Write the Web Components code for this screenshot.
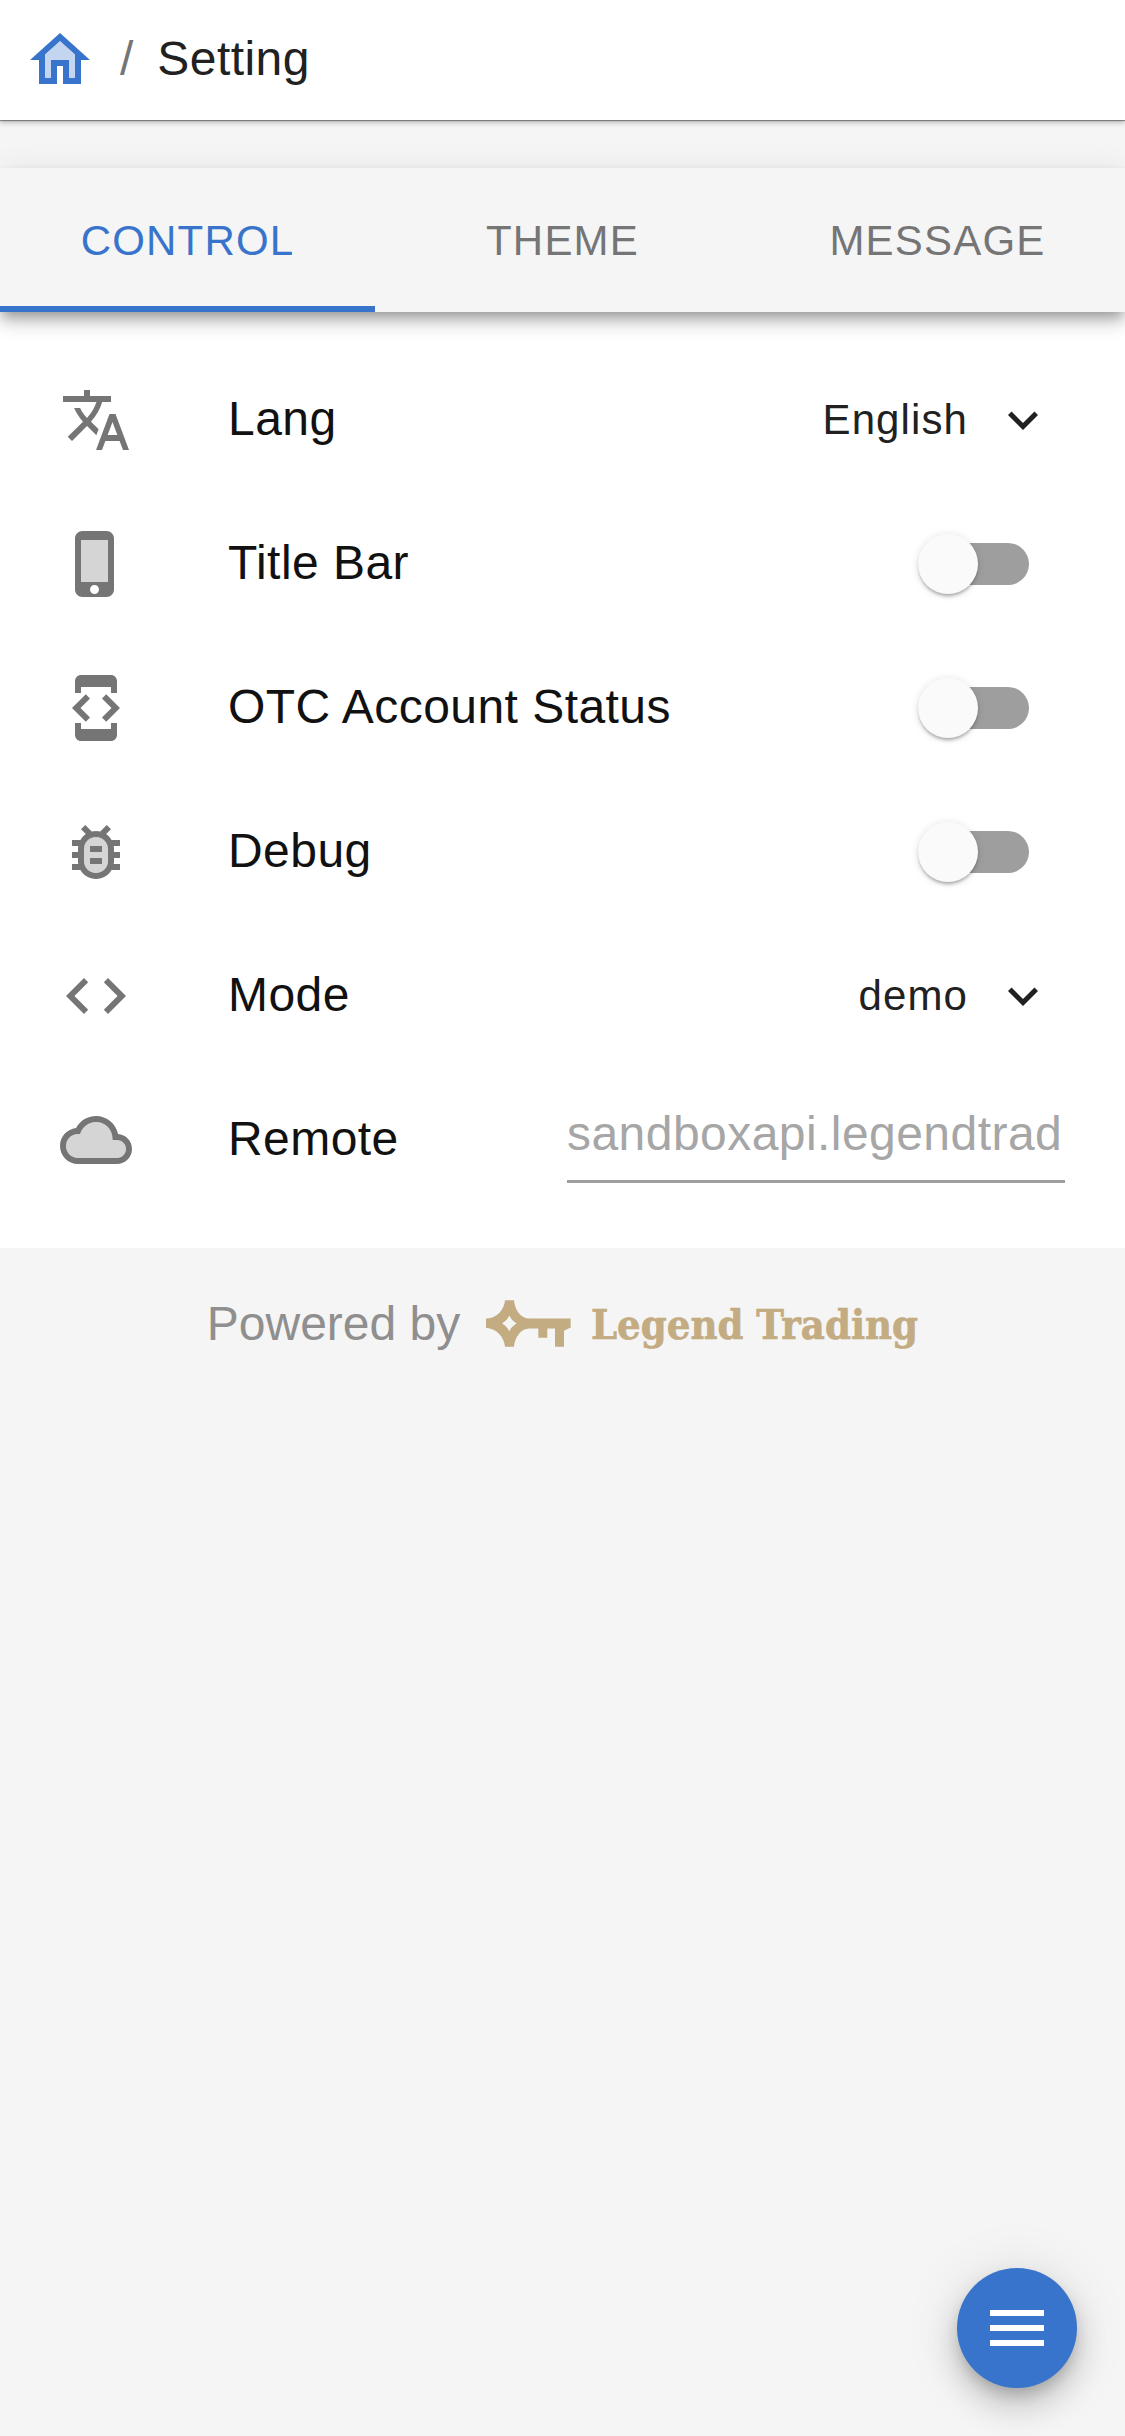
<!DOCTYPE html>
<html lang="en">
<head>
<meta charset="utf-8">
<title>Setting</title>
<style>
  html, body { margin: 0; padding: 0; }
  body { width: 1125px; height: 2436px; background: #f5f5f5; font-family: "Liberation Sans", Arial, sans-serif; overflow: hidden; position: relative; }
</style>
</head>
<body>
<app-header>
  <mat-icon slot="home" name="home" style="color:#3874cb"></mat-icon>
  Setting
</app-header>
<tab-bar>
  <tab-item active>CONTROL</tab-item>
  <tab-item>THEME</tab-item>
  <tab-item>MESSAGE</tab-item>
</tab-bar>
<setting-list>
  <setting-row icon="translate" label="Lang"><select-value>English</select-value></setting-row>
  <setting-row icon="phone" label="Title Bar"><toggle-switch></toggle-switch></setting-row>
  <setting-row icon="devmode" label="OTC Account Status"><toggle-switch></toggle-switch></setting-row>
  <setting-row icon="bug" label="Debug"><toggle-switch></toggle-switch></setting-row>
  <setting-row icon="code" label="Mode"><select-value>demo</select-value></setting-row>
  <setting-row icon="cloud" label="Remote"><text-field>sandboxapi.legendtrad</text-field></setting-row>
</setting-list>
<powered-by></powered-by>
<fab-button></fab-button>

<script>
const ICONS = {
  home: '<path opacity=".3" d="M7 10.19V18h2v-6h6v6h2v-7.81l-5-4.5z"/><path d="M12 3L2 12h3v8h6v-6h2v6h6v-8h3L12 3zm5 15h-2v-6H9v6H7v-7.81l5-4.5 5 4.5V18z"/>',
  translate: '<path d="M12.87 15.07l-2.54-2.51.03-.03c1.74-1.94 2.98-4.17 3.71-6.53H17V4h-7V2H8v2H1v1.99h11.17C11.5 7.92 10.44 9.75 9 11.35 8.07 10.32 7.3 9.19 6.69 8h-2c.73 1.63 1.73 3.17 2.98 4.56l-5.09 5.02L4 19l5-5 3.11 3.11.76-2.04zM18.5 10h-2L12 22h2l1.12-3h4.75L21 22h2l-4.5-12zm-2.62 7l1.62-4.33L19.12 17h-3.24z"/>',
  phone: '<path opacity=".3" d="M7 4h9v14H7z"/><path d="M15.5 1h-8C6.12 1 5 2.12 5 3.5v17C5 21.88 6.12 23 7.5 23h8c1.38 0 2.5-1.12 2.5-2.5v-17C18 2.12 16.88 1 15.5 1zm-4 21c-.83 0-1.5-.67-1.5-1.5s.67-1.5 1.5-1.5 1.5.67 1.5 1.5-.67 1.5-1.5 1.5zm4.5-4H7V4h9v14z"/>',
  devmode: '<path d="M7 5h10v2h2V3c0-1.1-.9-1.99-2-1.99L7 1c-1.1 0-2 .9-2 2v4h2V5zm8.41 11.59L20 12l-4.59-4.59L14 8.83 17.17 12 14 15.17l1.41 1.42zM10 15.17L6.83 12 10 8.83 8.59 7.41 4 12l4.59 4.59L10 15.17zM17 19H7v-2H5v4c0 1.1.9 2 2 2h10c1.1 0 2-.9 2-2v-4h-2v2z"/>',
  bug: '<rect opacity=".3" x="8" y="7" width="8" height="12" rx="4"/><path d="M20 8h-2.81c-.45-.78-1.07-1.45-1.82-1.96L17 4.41 15.59 3l-2.17 2.17C12.96 5.06 12.49 5 12 5s-.96.06-1.41.17L8.41 3 7 4.41l1.62 1.63C7.88 6.55 7.26 7.22 6.81 8H4v2h2.09c-.05.33-.09.66-.09 1v1H4v2h2v1c0 .34.04.67.09 1H4v2h2.81c1.04 1.79 2.97 3 5.19 3s4.15-1.21 5.19-3H20v-2h-2.09c.05-.33.09-.66.09-1v-1h2v-2h-2v-1c0-.34-.04-.67-.09-1H20V8zm-4 7c0 2.21-1.79 4-4 4s-4-1.79-4-4v-4c0-2.21 1.79-4 4-4s4 1.79 4 4v4zm-6-1h4v2h-4zm0-4h4v2h-4z"/>',
  code: '<path d="M9.4 16.6L4.8 12l4.6-4.6L8 6l-6 6 6 6 1.4-1.4zm5.2 0l4.6-4.6-4.6-4.6L16 6l6 6-6 6-1.4-1.4z"/>',
  cloud: '<path opacity=".3" d="M19 12h-1.5v-.5C17.5 8.46 15.04 6 12 6c-2.52 0-4.63 1.69-5.29 4H6c-2.21 0-4 1.79-4 4s1.79 4 4 4h13c1.66 0 3-1.34 3-3s-1.34-3-3-3z"/><path d="M19.35 10.04C18.67 6.59 15.64 4 12 4 9.11 4 6.6 5.64 5.35 8.04 2.34 8.36 0 10.91 0 14c0 3.31 2.69 6 6 6h13c2.76 0 5-2.24 5-5 0-2.64-2.05-4.78-4.65-4.96zM19 18H6c-2.21 0-4-1.79-4-4s1.79-4 4-4h.71C7.37 7.69 9.48 6 12 6c3.04 0 5.5 2.46 5.5 5.5v.5H19c1.66 0 3 1.34 3 3s-1.34 3-3 3z"/>',
  chevron: '<path d="M7.41 8.59L12 13.17l4.59-4.58L18 10l-6 6-6-6 1.41-1.41z"/>',
  menu: '<path d="M3 18h18v-2H3v2zm0-5h18v-2H3v2zm0-7v2h18V6H3z"/>'
};

function define(name, css, html) {
  customElements.define(name, class extends HTMLElement {
    connectedCallback() {
      if (this.shadowRoot) return;
      const root = this.attachShadow({ mode: 'open' });
      const body = typeof html === 'function' ? html(this) : html;
      root.innerHTML = '<style>' + css + '</style>' + body;
    }
  });
}

define('mat-icon',
  ':host{display:block;width:var(--size,72px);height:var(--size,72px);flex:none}svg{display:block;width:100%;height:100%;fill:currentColor}',
  el => '<svg viewBox="0 0 24 24" aria-hidden="true">' + ICONS[el.getAttribute('name')] + '</svg>');

define('app-header',
  `:host{display:flex;align-items:center;box-sizing:border-box;height:120px;padding-left:24px;background:#fff;position:relative;z-index:2;
     box-shadow:0 1px 1px rgba(0,0,0,.38),0 3px 5px rgba(0,0,0,.22);font-size:48px;letter-spacing:.45px;color:#212121}
   .sep{color:#757575;margin:0 23.5px 3px 24px}
   .t{padding-bottom:3px}`,
  '<slot name="home"></slot><span class="sep">/</span><span class="t"><slot></slot></span>');

define('tab-bar',
  `:host{display:grid;grid-template-columns:repeat(3,1fr);height:144px;margin-top:48px;background:#f5f5f5;position:relative;z-index:1;
     box-shadow:0 6px 12px -3px rgba(0,0,0,.3),0 12px 15px 0 rgba(0,0,0,.14),0 3px 30px 0 rgba(0,0,0,.08)}`,
  '<slot></slot>');

define('tab-item',
  `:host{display:flex;align-items:center;justify-content:center;box-sizing:border-box;height:144px;padding-top:1px;font-size:42px;letter-spacing:1.2px;color:#757575}
   :host([active]){color:#3874cb;border-bottom:6px solid #3874cb;padding-top:7px}`,
  '<slot></slot>');

define('setting-list',
  ':host{display:block;background:#fff;padding:36px 0}',
  '<slot></slot>');

define('setting-row',
  `:host{display:flex;align-items:center;box-sizing:border-box;height:144px;padding:0 60px;font-size:48px;letter-spacing:.45px;color:#111}
   .label{margin:0 0 3px 96px;white-space:nowrap}
   .ctl{margin-left:auto;display:flex;align-items:center}
   mat-icon{color:#757575}`,
  el => '<mat-icon name="' + el.getAttribute('icon') + '"></mat-icon><span class="label">' + el.getAttribute('label') + '</span><span class="ctl"><slot></slot></span>');

define('select-value',
  `:host{display:flex;align-items:center;font-size:42px;letter-spacing:1.1px;color:#212121;margin-right:12px}
   mat-icon{--size:60px;margin-left:25px;color:#212121}`,
  '<slot></slot><mat-icon name="chevron"></mat-icon>');

define('toggle-switch',
  `:host{display:block;position:relative;width:111px;height:60px;margin-right:36px}
   .track{position:absolute;left:9px;right:0;top:9px;height:42px;border-radius:21px;background:#9e9e9e}
   .thumb{position:absolute;left:0;top:0;width:60px;height:60px;border-radius:50%;background:#fafafa;
     box-shadow:0 3px 3px -2px rgba(0,0,0,.2),0 3px 3px 0 rgba(0,0,0,.14),0 1px 9px 0 rgba(0,0,0,.12)}`,
  '<div class="track"></div><div class="thumb"></div>');

define('text-field',
  `:host{display:block;box-sizing:border-box;width:498px;height:86px;overflow:hidden;border-bottom:3px solid #9e9e9e;
     font-size:48px;line-height:74px;letter-spacing:.45px;color:#a6a6a6;white-space:nowrap}`,
  '<slot></slot>');

define('powered-by',
  `:host{display:flex;align-items:center;justify-content:center;box-sizing:border-box;height:150px;padding-top:1px;font-size:48px;color:#8f8f8f}
   .key{display:block;width:85px;height:47px;margin:0 20px 0 26px;fill:#c3ab82;flex:none}
   .brand{display:block;width:327px;height:50px;flex:none;overflow:visible}
   text{font-family:"DejaVu Serif",serif;font-weight:700;font-size:41px;fill:#c3ab82;stroke:#c3ab82;stroke-width:.7px}`,
  `<span>Powered by</span>
   <svg class="key" viewBox="48 30 255 140" aria-hidden="true"><path fill-rule="evenodd" d="M105 30H132C134 58 152 85 178 85H302V112L282 122V170H255V115H232V143H205V115H178C152 115 134 142 132 170H105C103 142 80 115 48 113V85C80 85 103 58 105 30ZM118 76C122 86 130 94 140 100C130 106 122 114 118 124C114 114 106 106 96 100C106 94 114 86 118 76Z"/></svg>
   <svg class="brand" viewBox="0 0 327 50"><text x="0" y="40" textLength="327" lengthAdjust="spacingAndGlyphs">Legend Trading</text></svg>`);

define('fab-button',
  `:host{display:flex;align-items:center;justify-content:center;position:absolute;left:957px;top:2268px;width:120px;height:120px;border-radius:50%;background:#3874cb;color:#fff;
     box-shadow:0 9px 15px -3px rgba(0,0,0,.2),0 18px 30px 3px rgba(0,0,0,.14),0 3px 54px 6px rgba(0,0,0,.08)}`,
  '<mat-icon name="menu"></mat-icon>');
</script>
</body>
</html>
